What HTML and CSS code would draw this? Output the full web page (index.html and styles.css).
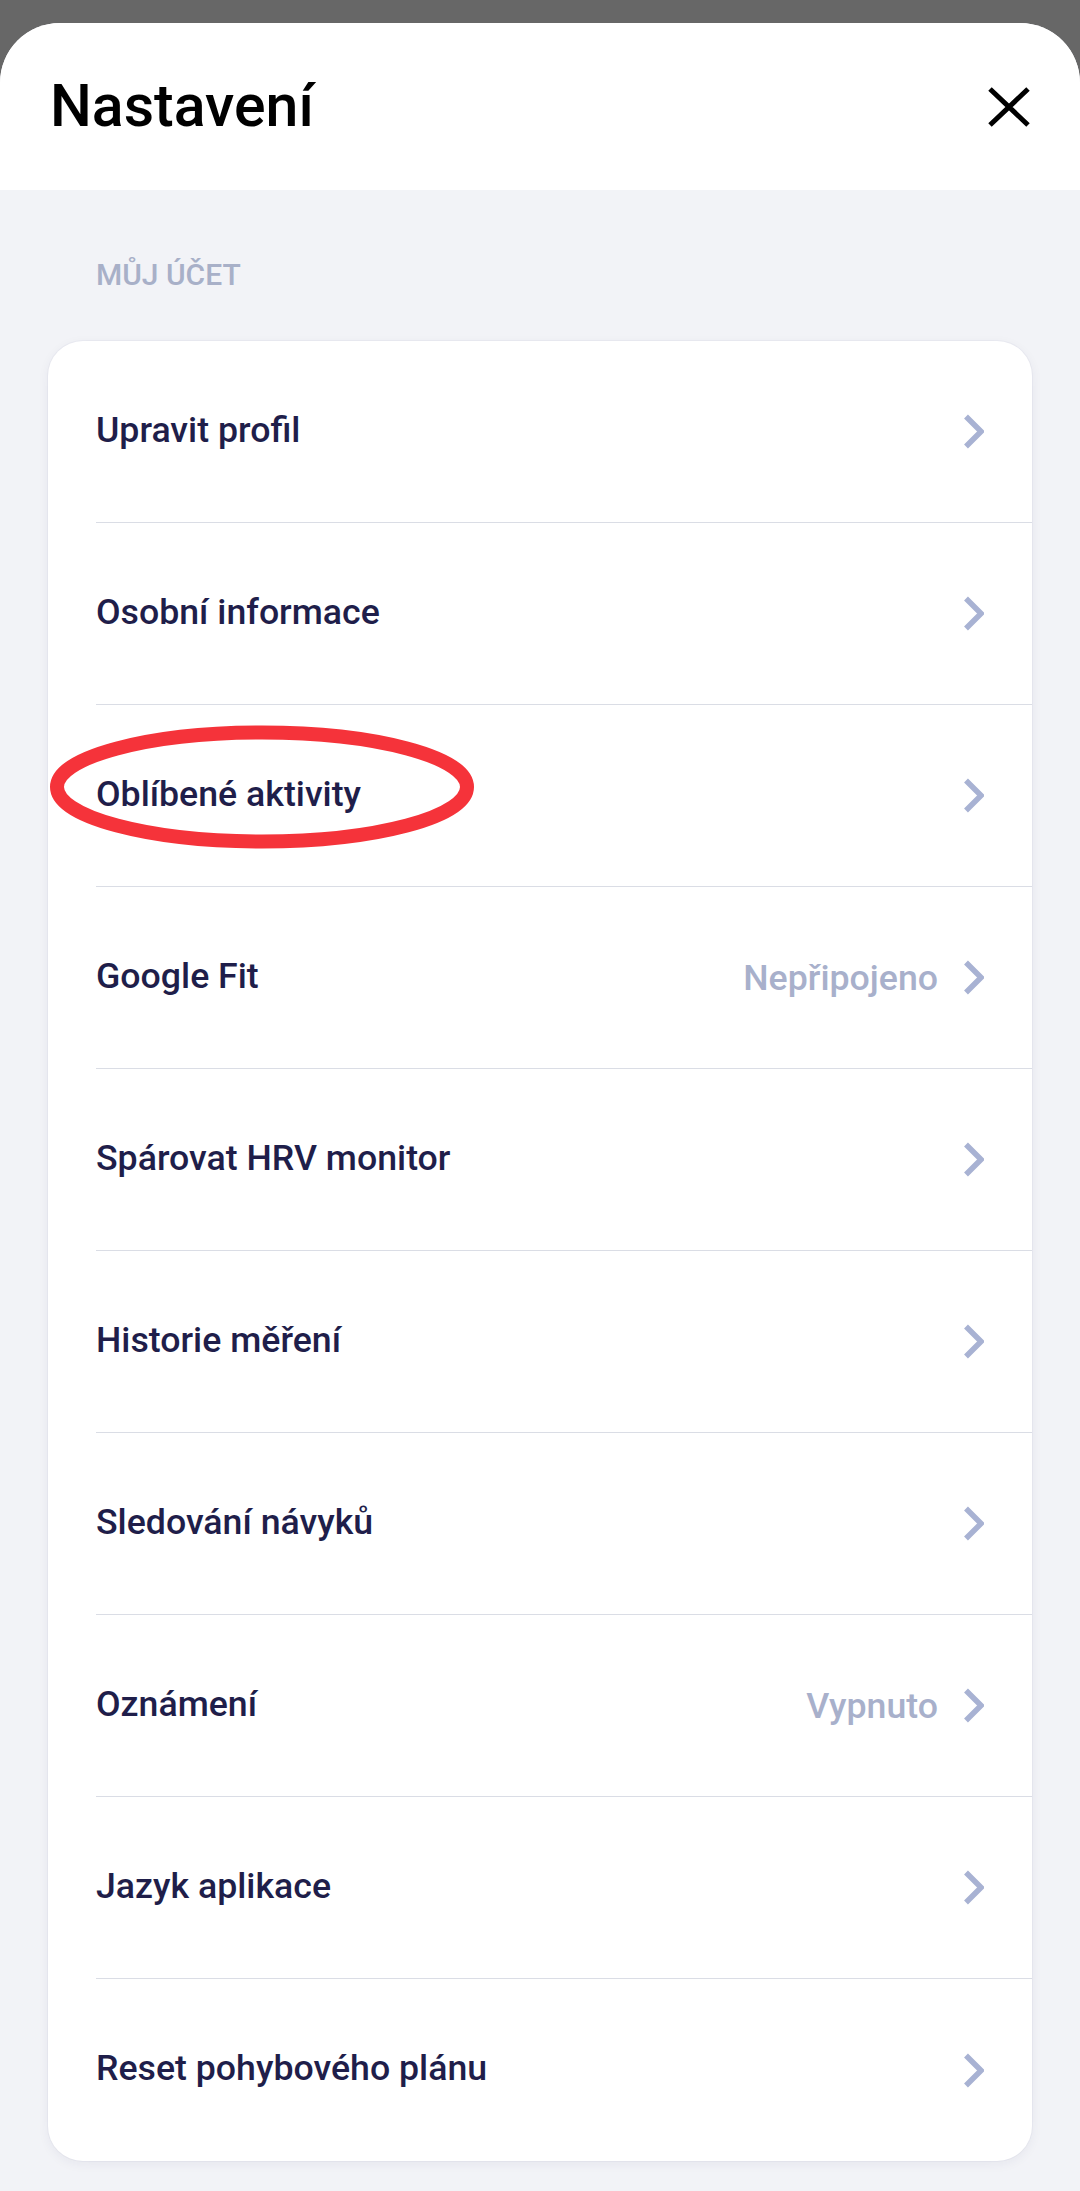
FILE: index.html
```html
<!DOCTYPE html>
<html lang="cs">
<head>
<meta charset="utf-8">
<title>Nastavení</title>
<link rel="stylesheet" href="styles.css">
</head>
<body>
<div class="sheet">
  <header class="header">
    <h1 class="title">Nastavení</h1>
    <button class="close" aria-label="Zavřít">
      <svg width="44" height="40" viewBox="0 0 44 40"><path d="M3 2 L41 38 M41 2 L3 38" stroke="#000" stroke-width="5" fill="none"/></svg>
    </button>
  </header>
  <main class="content">
    <div class="section-label">MŮJ ÚČET</div>
    <div class="card">
      <div class="row"><span class="label">Upravit profil</span><span class="right"><svg class="chev" viewBox="0 0 21 35"><path d="M3 2.5 L18 17.5 L3 32.5" /></svg></span></div>
      <div class="row"><span class="label">Osobní informace</span><span class="right"><svg class="chev" viewBox="0 0 21 35"><path d="M3 2.5 L18 17.5 L3 32.5" /></svg></span></div>
      <div class="row highlighted"><span class="label">Oblíbené aktivity</span><span class="right"><svg class="chev" viewBox="0 0 21 35"><path d="M3 2.5 L18 17.5 L3 32.5" /></svg></span>
        <svg class="mark" width="424" height="124" viewBox="0 0 424 124"><ellipse cx="212" cy="62" rx="205" ry="54.5" fill="none" stroke="#f5333a" stroke-width="14"/></svg>
      </div>
      <div class="row"><span class="label">Google Fit</span><span class="right"><span class="value">Nepřipojeno</span><svg class="chev" viewBox="0 0 21 35"><path d="M3 2.5 L18 17.5 L3 32.5" /></svg></span></div>
      <div class="row"><span class="label">Spárovat HRV monitor</span><span class="right"><svg class="chev" viewBox="0 0 21 35"><path d="M3 2.5 L18 17.5 L3 32.5" /></svg></span></div>
      <div class="row"><span class="label">Historie měření</span><span class="right"><svg class="chev" viewBox="0 0 21 35"><path d="M3 2.5 L18 17.5 L3 32.5" /></svg></span></div>
      <div class="row"><span class="label">Sledování návyků</span><span class="right"><svg class="chev" viewBox="0 0 21 35"><path d="M3 2.5 L18 17.5 L3 32.5" /></svg></span></div>
      <div class="row"><span class="label">Oznámení</span><span class="right"><span class="value">Vypnuto</span><svg class="chev" viewBox="0 0 21 35"><path d="M3 2.5 L18 17.5 L3 32.5" /></svg></span></div>
      <div class="row"><span class="label">Jazyk aplikace</span><span class="right"><svg class="chev" viewBox="0 0 21 35"><path d="M3 2.5 L18 17.5 L3 32.5" /></svg></span></div>
      <div class="row"><span class="label">Reset pohybového plánu</span><span class="right"><svg class="chev" viewBox="0 0 21 35"><path d="M3 2.5 L18 17.5 L3 32.5" /></svg></span></div>
    </div>
  </main>
</div>
</body>
</html>
```

FILE: styles.css
```css
* { box-sizing: border-box; }
html, body {
  margin: 0;
  padding: 0;
  background: #676767;
  font-family: Roboto, "Noto Sans", "Liberation Sans", sans-serif;
}
body { padding-top: 23px; }
.sheet {
  background: #f2f3f7;
  border-radius: 60px 60px 0 0;
  min-height: 2168px;
  overflow: hidden;
}
.header {
  background: #ffffff;
  height: 167px;
  display: flex;
  align-items: center;
  justify-content: space-between;
  padding: 0 49px 0 50px;
}
.title {
  margin: 0;
  font-size: 59px;
  font-weight: 500;
  color: #000;
  line-height: 1;
  padding-bottom: 2px;
}
.close {
  border: 0;
  background: none;
  padding: 0;
  width: 44px;
  height: 40px;
  display: block;
}
.close svg { display: block; }
.content {
  padding: 67px 48px 33px;
}
.section-label {
  margin-left: 48px;
  font-size: 30px;
  line-height: 36px;
  font-weight: 500;
  color: #a8b0c8;
  margin-bottom: 48px;
}
.card {
  background: #fff;
  border-radius: 35px;
  box-shadow: 0 3px 12px rgba(30, 40, 80, 0.06), 0 0 0 1px rgba(30, 40, 80, 0.03);
}
.row {
  position: relative;
  margin-left: 48px;
  padding-right: 48px;
  height: 182px;
  border-bottom: 1px solid #dadde5;
  display: flex;
  align-items: center;
  justify-content: space-between;
  padding-bottom: 4px;
}
.row:last-child { border-bottom: 0; height: 182px; }
.label {
  font-size: 35.7px;
  font-weight: 500;
  color: #1f1e4a;
  line-height: 42px;
}
.right {
  display: flex;
  align-items: center;
  gap: 25px;
}
.value {
  font-size: 35.7px;
  font-weight: 500;
  color: #a8b0cb;
  line-height: 42px;
  padding-top: 4px;
}
.chev {
  width: 21px;
  height: 35px;
  display: block;
  margin-top: 4px;
}
.chev path {
  fill: none;
  stroke: #a8b2d3;
  stroke-width: 5.5;
  stroke-linejoin: miter;
  stroke-linecap: butt;
}
.mark {
  position: absolute;
  left: -46px;
  top: 20px;
  pointer-events: none;
}
```
